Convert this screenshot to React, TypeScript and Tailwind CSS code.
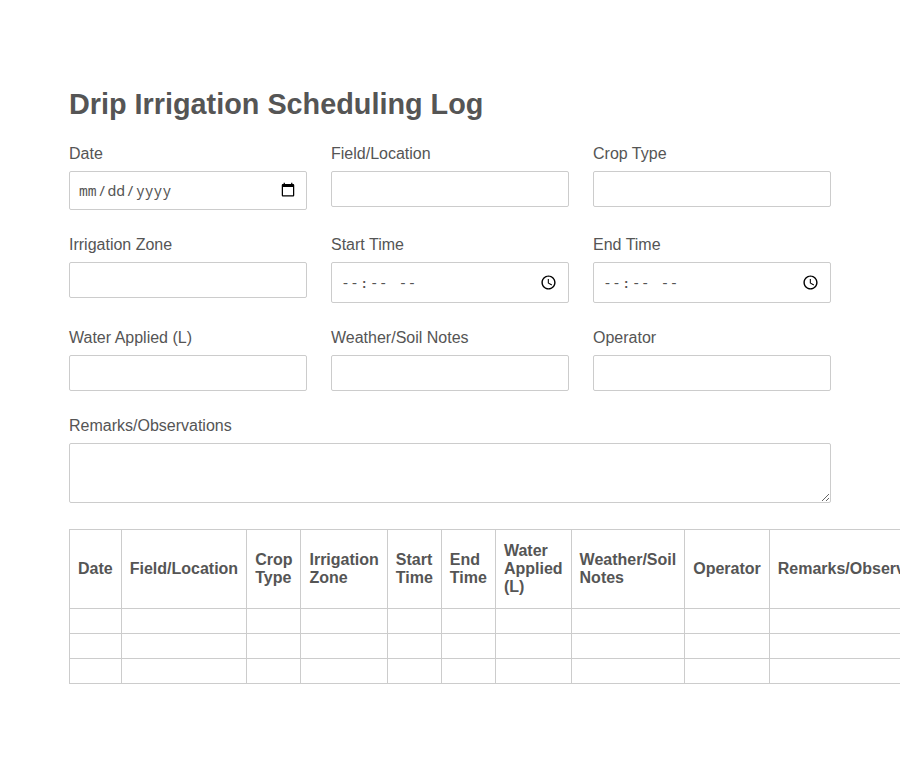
import clsx from "clsx";

const fields = [
  { id: "date", label: "Date", type: "date" },
  { id: "location", label: "Field/Location", type: "text" },
  { id: "crop", label: "Crop Type", type: "text" },
  { id: "zone", label: "Irrigation Zone", type: "text" },
  { id: "start", label: "Start Time", type: "time" },
  { id: "end", label: "End Time", type: "time" },
  { id: "water", label: "Water Applied (L)", type: "text" },
  { id: "weather", label: "Weather/Soil Notes", type: "text" },
  { id: "operator", label: "Operator", type: "text" },
];

const columns = [...fields.map((f) => f.label), "Remarks/Observations"];

const box = "block w-full rounded-[2px] border border-[#ccc] bg-white px-2 outline-none";

function Field({ id, label, type }: { id: string; label: string; type: string }) {
  return (
    <div>
      <label htmlFor={id} className="mb-2 block leading-[18px]">{label}</label>
      <input
        id={id}
        type={type}
        className={clsx(
          box,
          type === "text" && "h-9",
          type === "date" && "h-[39px] font-['Noto_Sans_Mono',monospace] text-base [&::-webkit-datetime-edit]:text-[14.7px]",
          type === "time" && "h-[41px] font-['DejaVu_Sans_Mono',monospace] text-base [&::-webkit-datetime-edit]:text-[14.8px] [&::-webkit-datetime-edit-fields-wrapper]:pt-[2px]"
        )}
      />
    </div>
  );
}

export default function App() {
  return (
    <div className="min-h-[780px] w-full overflow-hidden bg-white px-[69px] pt-[87px] font-['Liberation_Sans',Arial,sans-serif] text-base text-[#555]">
      <h1 className="mb-6 text-[28.8px] leading-[34px] font-bold">Drip Irrigation Scheduling Log</h1>

      <form>
        <div className="grid grid-cols-3 gap-x-6 gap-y-[26px]">
          {fields.map((f) => (
            <Field key={f.id} {...f} />
          ))}
        </div>
        <div className="mt-[26px]">
          <label htmlFor="remarks" className="mb-2 block leading-[18px]">Remarks/Observations</label>
          <textarea id="remarks" className={clsx(box, "h-[60px] resize-y py-2")} />
        </div>
      </form>

      <table className="mt-[26px] w-full border-collapse">
        <thead>
          <tr>
            {columns.map((c) => (
              <th key={c} className="border border-[#ccc] px-2 py-3 text-left leading-[18px] font-bold">{c}</th>
            ))}
          </tr>
        </thead>
        <tbody>
          {[0, 1, 2].map((row) => (
            <tr key={row}>
              {columns.map((c) => (
                <td key={c} className="border border-[#ccc] px-2 py-3"></td>
              ))}
            </tr>
          ))}
        </tbody>
      </table>
    </div>
  );
}
